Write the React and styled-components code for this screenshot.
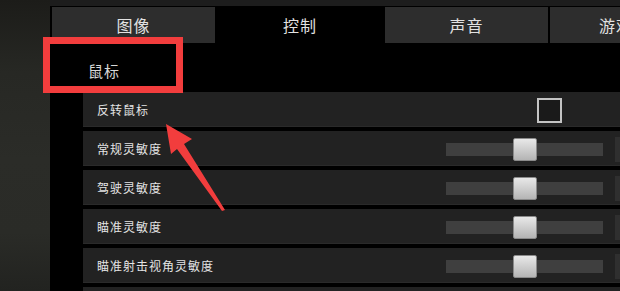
import React from "react";
import styled, { createGlobalStyle } from "styled-components";

const GlobalStyle = createGlobalStyle`
	html, body {
		margin: 0;
		padding: 0;
		background: #000;
		font-family: "Noto Sans CJK SC", "Noto Sans", sans-serif;
	}
`

const Screen = styled.div`
	position: relative;
	width: 620px;
	height: 291px;
	display: flex;
	overflow: hidden;
`

const SideStrip = styled.div`
	flex: 0 0 50px;
	background: linear-gradient(to bottom, #1c1c19 0%, #272824 25%, #2b2c28 55%, #2a2b27 80%, #222320 100%);
`

const Panel = styled.div`
	flex: 1;
	background: #000;
	display: flex;
	flex-direction: column;
	overflow: hidden;
`

const TopStrip = styled.div`
	height: 6px;
	background: #1d1d1d;
	flex-shrink: 0;
`

const TabBar = styled.div`
	display: flex;
	gap: 2px;
	padding: 1px 0 0 2px;
	background: #000;
	flex-shrink: 0;
`

const Tab = styled.div`
	flex: 0 0 ${p => p.$width || 163}px;
	height: 36px;
	display: flex;
	align-items: center;
	justify-content: center;
	background: ${p => (p.$active ? "#000" : "#2d2d2d")};
	color: #e2e2e2;
	font-size: 16px;
	letter-spacing: 1px;
	white-space: nowrap;
`

const SectionTitle = styled.div`
	height: 49px;
	padding: 5px 0 0 38px;
	box-sizing: border-box;
	display: flex;
	align-items: center;
	color: #d8d8d8;
	font-size: 15px;
	letter-spacing: 1px;
	flex-shrink: 0;
`

const RowList = styled.div`
	display: flex;
	flex-direction: column;
	gap: 4px;
	margin-left: 33px;
	width: 620px;
`

const Row = styled.div`
	height: 35px;
	flex-shrink: 0;
	display: flex;
	align-items: center;
	background: #222;
	border-bottom: 1px solid #2a2a2a;
	box-sizing: border-box;
	padding-left: 14px;
`

const Label = styled.div`
	flex: 0 0 349px;
	color: #e4e4e4;
	font-size: 12px;
	letter-spacing: 1px;
`

const Controls = styled.div`
	display: flex;
	align-items: center;
`

const Checkbox = styled.div`
	width: 25px;
	height: 25px;
	box-sizing: border-box;
	border: 2px solid #c4c4c4;
	background: #1a1a1a;
	margin-left: 91px;
	margin-top: 2px;
`

const Track = styled.div`
	position: relative;
	width: 157px;
	height: 13px;
	background: #3f3f3f;
	margin-top: 2px;
`

const Thumb = styled.div`
	position: absolute;
	top: -5px;
	width: 24px;
	height: 23px;
	box-sizing: border-box;
	border-radius: 2px;
	border: 1px solid #8a8a8a;
	background: linear-gradient(to bottom, #e8e8e8, #c9c9c9 60%, #b4b4b4);
`

const ValueBox = styled.div`
	width: 50px;
	height: 25px;
	margin-left: 12px;
	margin-top: 2px;
	background: #2f2f2f;
`

const Highlight = styled.div`
	position: absolute;
	left: 43px;
	top: 37px;
	width: 140px;
	height: 56px;
	box-sizing: border-box;
	border: 7px solid #f23d3d;
	pointer-events: none;
`

const ArrowLayer = styled.svg`
	position: absolute;
	left: 0;
	top: 0;
	pointer-events: none;
`

const rows = [
	{ label: "反转鼠标", type: "check" },
	{ label: "常规灵敏度", value: 67 },
	{ label: "驾驶灵敏度", value: 67 },
	{ label: "瞄准灵敏度", value: 67 },
	{ label: "瞄准射击视角灵敏度", value: 67 },
	{ label: "", value: 67 },
]

const Slider = ({ value }) => (
	<Controls>
		<Track>
			<Thumb style={{ left: value }} />
		</Track>
		<ValueBox />
	</Controls>
)

const App = () => (
	<Screen>
		<GlobalStyle />
		<SideStrip />
		<Panel>
			<TopStrip />
			<TabBar>
				<Tab>图像</Tab>
				<Tab $active $width={166}>控制</Tab>
				<Tab>声音</Tab>
				<Tab $width={132}>游戏</Tab>
			</TabBar>
			<SectionTitle>鼠标</SectionTitle>
			<RowList>
				{rows.map((row, i) => (
					<Row key={i}>
						<Label>{row.label}</Label>
						{row.type === "check" ? (
							<Controls>
								<Checkbox />
							</Controls>
						) : (
							<Slider value={row.value} />
						)}
					</Row>
				))}
			</RowList>
		</Panel>
		<Highlight />
		<ArrowLayer width="620" height="291" viewBox="0 0 620 291">
			<polygon
				points="166,124 192,139 184,144 225,210 222,211 177,149 171,154"
				fill="#f23d3d"
			/>
		</ArrowLayer>
	</Screen>
)

export default App;
